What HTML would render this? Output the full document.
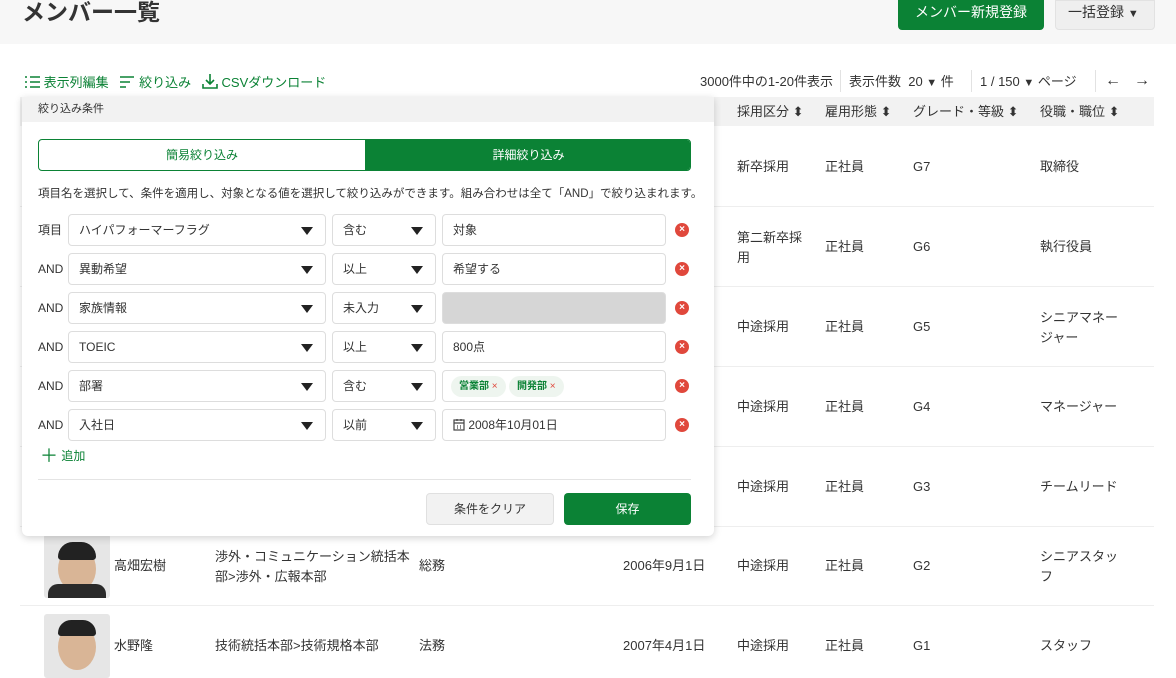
<!DOCTYPE html>
<html><head><meta charset="utf-8"><style>
*{box-sizing:border-box;margin:0;padding:0}
body{width:1176px;height:656px;overflow:hidden;background:#fff;font-family:"Liberation Sans","Noto Sans CJK JP",sans-serif;color:#333;position:relative}
.a{position:absolute}
.hdr{left:0;top:0;width:1176px;height:44px;background:#f7f7f7}
.t{font-size:13px;white-space:nowrap;line-height:18px}
.g{color:#0b8235}
.row{left:20px;width:1134px;height:1px;background:#eee}
.sel{position:absolute;height:32px;border:1px solid #ddd;border-radius:4px;background:#fff;font-size:12px;line-height:30px;padding-left:10px;color:#333}
.tri{position:absolute;right:12px;top:12px;width:0;height:0;border-left:6px solid transparent;border-right:6px solid transparent;border-top:8px solid #222}
.x{position:absolute;width:14px;height:14px;border-radius:50%;background:#e0483c;color:#fff;font-size:10px;line-height:14px;text-align:center;font-weight:bold}
.lbl{position:absolute;left:38px;font-size:12px;line-height:16px}
.photo{position:absolute;left:44px;width:66px;height:64px;background:#e6e6e6;border-radius:3px;overflow:hidden}
.sep{position:absolute;top:70px;width:1px;height:22px;background:#e2e2e2}
</style></head><body>
<div class="a hdr"></div>
<div class="a" style="left:22px;top:-4px;font-size:23px;font-weight:bold;color:#333;line-height:32px">メンバー一覧</div>
<div class="a" style="left:898px;top:0;width:146px;height:30px;background:#0b8235;border-radius:0 0 4px 4px;color:#fff;font-size:14px;text-align:center;line-height:24px">メンバー新規登録</div>
<div class="a" style="left:1055px;top:0;width:100px;height:30px;background:#efefef;border:1px solid #e2e2e2;border-radius:0 0 4px 4px;font-size:14px;line-height:22px;padding-left:12px">一括登録 <span style="font-size:11px">▼</span></div>

<div class="a t g" style="left:24px;top:73px">
<svg width="16" height="14" style="vertical-align:-2px"><g stroke="#0b8235" stroke-width="1.6"><path d="M6 2h10M6 7h10M6 12h10M1 2h2M1 7h2M1 12h2"/></g></svg> 表示列編集 &nbsp;
<svg width="16" height="14" style="vertical-align:-2px"><g stroke="#0b8235" stroke-width="1.6"><path d="M1 2h14M1 7h10M1 12h6"/></g></svg> 絞り込み &nbsp;
<svg width="16" height="16" style="vertical-align:-2px"><g stroke="#0b8235" stroke-width="1.6" fill="none"><path d="M8 1v10M4 7l4 4 4-4M1 11v4h14v-4"/></g></svg> CSVダウンロード</div>
<div class="a t" style="left:700px;top:73px">3000件中の1-20件表示</div>
<div class="sep" style="left:840px"></div>
<div class="a t" style="left:849px;top:73px">表示件数 &nbsp;20 <span style="font-size:11px">▼</span> 件</div>
<div class="sep" style="left:971px"></div>
<div class="a t" style="left:980px;top:73px">1 / 150 <span style="font-size:11px">▼</span> ページ</div>
<div class="sep" style="left:1095px"></div>
<div class="a t" style="left:1105px;top:72px;font-size:16px">←</div>
<div class="a t" style="left:1134px;top:72px;font-size:16px">→</div>

<div class="a" style="left:20px;top:97px;width:1134px;height:29px;background:#f2f2f2"></div>
<div class="a t" style="left:737px;top:103px">採用区分 ⬍</div>
<div class="a t" style="left:825px;top:103px">雇用形態 ⬍</div>
<div class="a t" style="left:913px;top:103px">グレード・等級 ⬍</div>
<div class="a t" style="left:1040px;top:103px">役職・職位 ⬍</div>

<div class="a row" style="top:206px"></div><div class="a row" style="top:286px"></div><div class="a row" style="top:366px"></div><div class="a row" style="top:446px"></div><div class="a row" style="top:526px"></div><div class="a row" style="top:605px"></div>

<div class="a t" style="left:737px;top:158px">新卒採用</div><div class="a t" style="left:825px;top:158px">正社員</div><div class="a t" style="left:913px;top:158px">G7</div><div class="a t" style="left:1040px;top:158px">取締役</div>
<div class="a t" style="left:737px;top:228px;line-height:20px">第二新卒採<br>用</div><div class="a t" style="left:825px;top:238px">正社員</div><div class="a t" style="left:913px;top:238px">G6</div><div class="a t" style="left:1040px;top:238px">執行役員</div>
<div class="a t" style="left:737px;top:318px">中途採用</div><div class="a t" style="left:825px;top:318px">正社員</div><div class="a t" style="left:913px;top:318px">G5</div><div class="a t" style="left:1040px;top:308px;line-height:20px">シニアマネー<br>ジャー</div>
<div class="a t" style="left:737px;top:398px">中途採用</div><div class="a t" style="left:825px;top:398px">正社員</div><div class="a t" style="left:913px;top:398px">G4</div><div class="a t" style="left:1040px;top:398px">マネージャー</div>
<div class="a t" style="left:737px;top:478px">中途採用</div><div class="a t" style="left:825px;top:478px">正社員</div><div class="a t" style="left:913px;top:478px">G3</div><div class="a t" style="left:1040px;top:478px">チームリード</div>
<div class="a t" style="left:737px;top:557px">中途採用</div><div class="a t" style="left:825px;top:557px">正社員</div><div class="a t" style="left:913px;top:557px">G2</div><div class="a t" style="left:1040px;top:547px;line-height:20px">シニアスタッ<br>フ</div>
<div class="a t" style="left:737px;top:637px">中途採用</div><div class="a t" style="left:825px;top:637px">正社員</div><div class="a t" style="left:913px;top:637px">G1</div><div class="a t" style="left:1040px;top:637px">スタッフ</div>

<div class="photo" style="top:534px"><div class="a" style="left:14px;top:12px;width:38px;height:46px;border-radius:50%;background:#d9b596"></div><div class="a" style="left:14px;top:8px;width:38px;height:18px;border-radius:18px 18px 4px 4px;background:#222"></div><div class="a" style="left:4px;top:50px;width:58px;height:20px;border-radius:10px 10px 0 0;background:#2a2a2a"></div></div>
<div class="photo" style="top:614px"><div class="a" style="left:14px;top:10px;width:38px;height:46px;border-radius:50%;background:#d9b596"></div><div class="a" style="left:14px;top:6px;width:38px;height:16px;border-radius:18px 18px 4px 4px;background:#222"></div></div>
<div class="a t" style="left:114px;top:557px">高畑宏樹</div>
<div class="a t" style="left:215px;top:547px;line-height:20px">渉外・コミュニケーション統括本<br>部&gt;渉外・広報本部</div>
<div class="a t" style="left:419px;top:557px">総務</div><div class="a t" style="left:623px;top:557px">2006年9月1日</div>
<div class="a t" style="left:114px;top:637px">水野隆</div><div class="a t" style="left:215px;top:637px">技術統括本部&gt;技術規格本部</div>
<div class="a t" style="left:419px;top:637px">法務</div><div class="a t" style="left:623px;top:637px">2007年4月1日</div>

<div class="a" style="left:22px;top:97px;width:692px;height:439px;background:#fff;border-radius:0 0 6px 6px;box-shadow:0 2px 8px rgba(0,0,0,.18)">
<div class="a" style="left:0;top:0;width:692px;height:25px;background:#f2f2f2;font-size:11px;line-height:25px;padding-left:16px">絞り込み条件</div>
<div class="a" style="left:16px;top:42px;width:653px;height:32px;border:1px solid #0b8235;border-radius:4px;overflow:hidden">
<div class="a" style="left:0;top:0;width:326px;height:30px;font-size:12px;color:#0b8235;text-align:center;line-height:30px">簡易絞り込み</div>
<div class="a" style="left:326px;top:0;width:327px;height:30px;background:#0b8235;font-size:12px;color:#fff;text-align:center;line-height:30px">詳細絞り込み</div></div>
<div class="a" style="left:16px;top:88px;font-size:11.5px;white-space:nowrap">項目名を選択して、条件を適用し、対象となる値を選択して絞り込みができます。組み合わせは全て「AND」で絞り込まれます。</div>
</div>

<div class="lbl" style="top:222px">項目</div>
<div class="sel" style="left:68px;top:214px;width:258px">ハイパフォーマーフラグ<i class="tri"></i></div>
<div class="sel" style="left:332px;top:214px;width:104px">含む<i class="tri"></i></div>
<div class="sel" style="left:442px;top:214px;width:224px">対象</div>
<div class="x" style="left:675px;top:223px">×</div>

<div class="lbl" style="top:261px">AND</div>
<div class="sel" style="left:68px;top:253px;width:258px">異動希望<i class="tri"></i></div>
<div class="sel" style="left:332px;top:253px;width:104px">以上<i class="tri"></i></div>
<div class="sel" style="left:442px;top:253px;width:224px">希望する</div>
<div class="x" style="left:675px;top:262px">×</div>

<div class="lbl" style="top:300px">AND</div>
<div class="sel" style="left:68px;top:292px;width:258px">家族情報<i class="tri"></i></div>
<div class="sel" style="left:332px;top:292px;width:104px">未入力<i class="tri"></i></div>
<div class="sel" style="left:442px;top:292px;width:224px;background:#d6d6d6"></div>
<div class="x" style="left:675px;top:301px">×</div>

<div class="lbl" style="top:339px">AND</div>
<div class="sel" style="left:68px;top:331px;width:258px">TOEIC<i class="tri"></i></div>
<div class="sel" style="left:332px;top:331px;width:104px">以上<i class="tri"></i></div>
<div class="sel" style="left:442px;top:331px;width:224px">800点</div>
<div class="x" style="left:675px;top:340px">×</div>

<div class="lbl" style="top:378px">AND</div>
<div class="sel" style="left:68px;top:370px;width:258px">部署<i class="tri"></i></div>
<div class="sel" style="left:332px;top:370px;width:104px">含む<i class="tri"></i></div>
<div class="sel" style="left:442px;top:370px;width:224px;padding-left:8px"><span style="display:inline-block;height:21px;line-height:21px;background:#eef5ef;border-radius:11px;padding:0 8px;font-size:10px;color:#0b8235;font-weight:bold;vertical-align:1px">営業部 <span style="color:#e0483c;font-weight:normal">×</span></span> <span style="display:inline-block;height:21px;line-height:21px;background:#eef5ef;border-radius:11px;padding:0 8px;font-size:10px;color:#0b8235;font-weight:bold;vertical-align:1px">開発部 <span style="color:#e0483c;font-weight:normal">×</span></span></div>
<div class="x" style="left:675px;top:379px">×</div>

<div class="lbl" style="top:417px">AND</div>
<div class="sel" style="left:68px;top:409px;width:258px">入社日<i class="tri"></i></div>
<div class="sel" style="left:332px;top:409px;width:104px">以前<i class="tri"></i></div>
<div class="sel" style="left:442px;top:409px;width:224px"><svg width="12" height="13" style="vertical-align:-2px"><g stroke="#444" fill="none" stroke-width="1.2"><rect x="1" y="2" width="10" height="10"/><path d="M1 5h10M4 1v2M8 1v2M4 8h1M7 8h1M4 10h1M7 10h1"/></g></svg> 2008年10月01日</div>
<div class="x" style="left:675px;top:418px">×</div>

<div class="a g" style="left:40px;top:447px;font-size:12px;line-height:18px"><span style="font-size:18px;vertical-align:-2px">＋</span> 追加</div>
<div class="a" style="left:38px;top:479px;width:653px;height:1px;background:#e4e4e4"></div>
<div class="a" style="left:426px;top:493px;width:128px;height:32px;background:#f2f2f2;border:1px solid #e0e0e0;border-radius:4px;font-size:12px;text-align:center;line-height:30px">条件をクリア</div>
<div class="a" style="left:564px;top:493px;width:127px;height:32px;background:#0b8235;border-radius:4px;font-size:12px;color:#fff;text-align:center;line-height:32px">保存</div>
</body></html>
